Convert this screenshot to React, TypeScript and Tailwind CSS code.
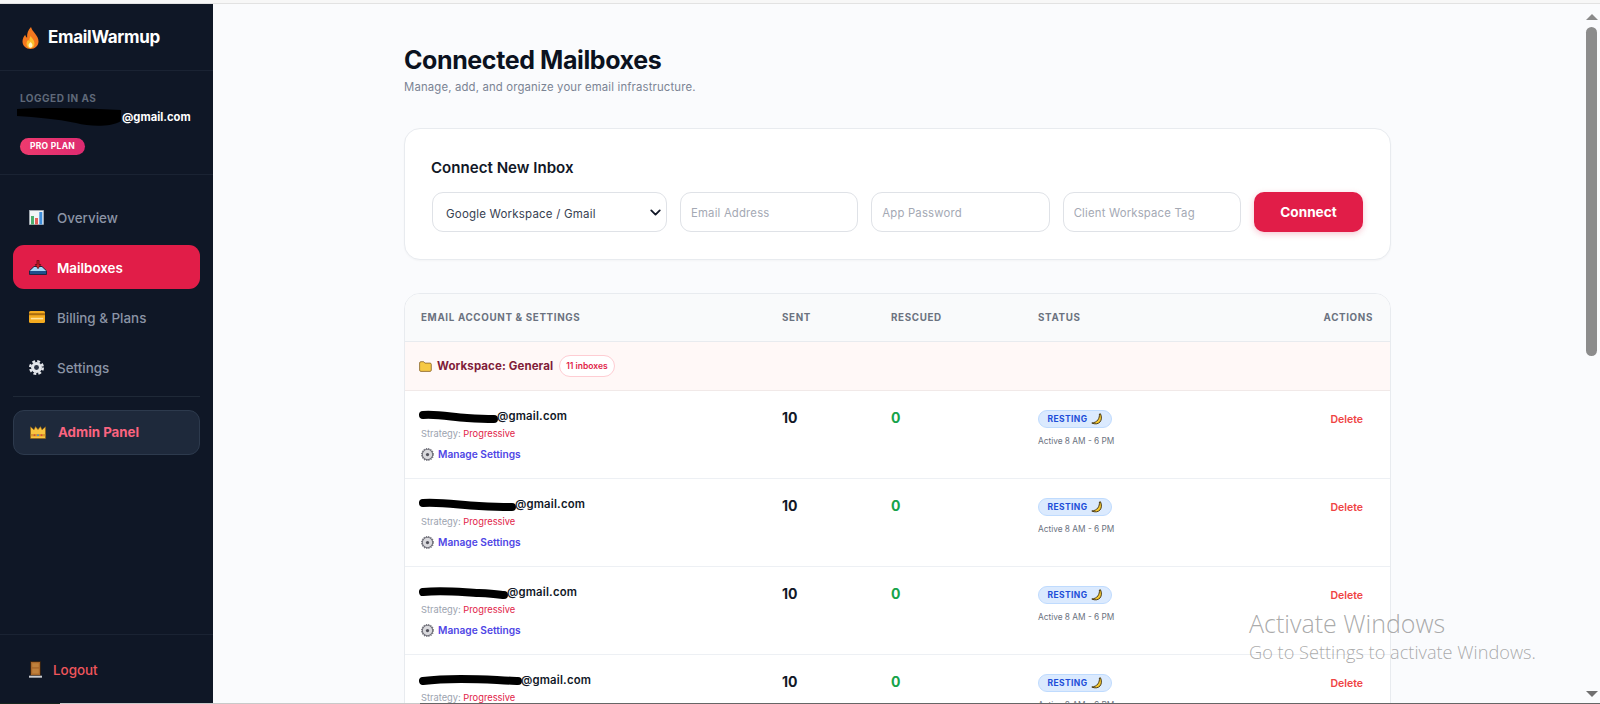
import React from "react";
import { ChevronDown } from "lucide-react";

const Fire = () => (
  <svg width="17" height="22" viewBox="0 0 17 22" className="shrink-0">
    <path d="M9 0c1 3 2 4 4 6.500 2 2.500 3.500 5 3.500 8C16.500 18.800 13 22 8.500 22S.5 18.800.5 14.500c0-3 1.500-5 2.700-6.700.3 1.500 1 2.400 1.900 2.900C4.800 6.500 6.200 2.500 9 0z" fill="#f4781f" />
    <path d="M8.800 9c.5 2 3.700 3.800 3.700 7.500 0 2.800-1.800 4.700-4 4.700s-4-1.900-4-4.500c0-1.800 1-3 1.900-3.900.2.800.5 1.300 1 1.600C7.200 12.500 7.600 10.500 8.800 9z" fill="#fbc02d" />
    <path d="M8.600 15c.8 1 1.900 1.700 1.900 3.200 0 1.300-.9 2.500-2 2.500s-2-1.100-2-2.400c0-1.400 1.500-2 2.100-3.300z" fill="#fff3c4" />
  </svg>
);
const Chart = () => (
  <svg width="15" height="15" viewBox="0 0 15 15" className="shrink-0">
    <rect x=".4" y=".4" width="14.200" height="14.200" fill="#f1f4f6" stroke="#a7afb8" strokeWidth=".6" />
    <rect x="2" y="6" width="3" height="8.500" fill="#4cae6c" />
    <rect x="6" y="8" width="3" height="6.500" fill="#e0605a" />
    <rect x="10.300" y="2" width="3" height="12.500" fill="#3f8fdc" />
  </svg>
);
const Inbox = () => (
  <svg width="18" height="15" viewBox="0 0 18 15" className="shrink-0">
    <path d="M5 6.500h8l4.500 4.300v3.700H.5v-3.700z" fill="#a6d8f8" stroke="#0c1a30" strokeWidth=".9" />
    <rect x=".9" y="11" width="16.200" height="3.100" fill="#1f4f8c" />
    <path d="M8 .3h2v4.200h1.800L9 8.700 6.200 4.500H8z" fill="#c81e24" stroke="#4a0a12" strokeWidth=".7" />
  </svg>
);
const Card = () => (
  <svg width="16" height="12" viewBox="0 0 16 12" className="shrink-0">
    <rect width="16" height="12" rx="1.500" fill="#f4ab1f" />
    <rect y="2.200" width="16" height="2" fill="#a86c10" />
    <rect x="1.800" y="6.800" width="12.400" height="1.600" fill="#ffe29a" />
  </svg>
);
const Gear = () => (
  <svg width="15" height="15" viewBox="0 0 16 16" className="shrink-0">
    <circle cx="8" cy="8" r="5.800" fill="#e4e7eb" />
    <circle cx="8" cy="8" r="6.700" fill="none" stroke="#e4e7eb" strokeWidth="2.600" strokeDasharray="3 2.260" />
    <circle cx="8" cy="8" r="2.600" fill="#2b3444" />
  </svg>
);
const SmallGear = () => (
  <svg width="13" height="13" viewBox="0 0 16 16" className="shrink-0">
    <circle cx="8" cy="8" r="6.400" fill="#d9d9dd" stroke="#71717a" strokeWidth="1.300" />
    <circle cx="8" cy="8" r="7.300" fill="none" stroke="#71717a" strokeWidth="1.300" strokeDasharray="1.500 1.360" />
    <circle cx="8" cy="8" r="2" fill="#52525b" />
  </svg>
);
const Crown = () => (
  <svg width="16" height="13" viewBox="0 0 16 13" className="shrink-0">
    <path d="M.5 .8l3.500 3L5.500.6 8 3.600 10.500.6 12 3.800l3.500-3v11.700H.5z" fill="#f9c440" stroke="#8a5a12" strokeWidth=".6" />
    <rect x=".8" y="8" width="14.400" height="2.400" fill="#d99a2b" />
    <circle cx="4.500" cy="9.200" r=".9" fill="#d8483a" />
    <circle cx="8" cy="9.200" r=".9" fill="#3f8fdc" />
    <circle cx="11.500" cy="9.200" r=".9" fill="#d8483a" />
  </svg>
);
const Door = () => (
  <svg width="13" height="17" viewBox="0 0 13 17" className="shrink-0">
    <rect x="1.500" y=".5" width="10" height="14" fill="#a8672a" stroke="#2b1c10" strokeWidth=".8" />
    <rect x="3.200" y="2.200" width="6.600" height="4" fill="#c0813c" />
    <rect x="3.200" y="7.600" width="6.600" height="5" fill="#c0813c" />
    <rect y="14.700" width="13" height="2" fill="#c9ccd1" />
  </svg>
);
const Folder = () => (
  <svg width="13" height="11" viewBox="0 0 13 11" className="shrink-0">
    <path d="M.6 2c0-.8.5-1.300 1.300-1.300h2.800l1.200 1.400h5.200c.7 0 1.200.5 1.200 1.200v5.900c0 .7-.5 1.200-1.200 1.200H1.900c-.8 0-1.300-.5-1.300-1.200z" fill="#f6c945" stroke="#86622a" strokeWidth=".8" />
  </svg>
);
const Banana = () => (
  <svg width="12" height="12" viewBox="0 0 12 12" className="shrink-0">
    <path d="M9.500.8c1.300 3 1.300 6-.5 8.200C7.200 11 3.800 11.500.8 10c2.800-.3 4.700-1.300 6-3C8.100 5.200 8.600 3 8.400 1z" fill="#f7c92f" stroke="#3a2c0c" strokeWidth=".9" strokeLinejoin="round" />
  </svg>
);
const Scribble = ({ w, d }: { w: number; d: string }) => (
  <svg width={w} height={14} viewBox={`0 0 ${w} 14`} className="shrink-0 -mr-px">
    <path d={d} fill="none" stroke="#000" strokeWidth="8" strokeLinecap="round" strokeLinejoin="round" />
  </svg>
);

const rows = [
  { w: 79, d: "M4 5C20 4 32 7 48 8s20 1 27 1" },
  { w: 97, d: "M4 5C24 4 40 7 60 8s26 1 33 1" },
  { w: 89, d: "M4 6C24 4 40 6 60 7s22 2 25 2" },
  { w: 103, d: "M4 7C26 4 60 5 78 6s18 1 21 1" },
];

const inputClass =
  "h-[40px] min-w-0 flex-1 rounded-[11px] border border-[#dfe2e7] bg-white px-[10px] pt-[2px] text-[11.300px] tracking-[0.2px] placeholder:text-[#a4a9b4]";

function NavItem({ icon, label, active }: { icon: React.ReactNode; label: string; active?: boolean }) {
  return (
    <div
      className={
        active
          ? "flex h-[44px] items-center rounded-[11px] bg-[#e11d48] pl-[16px] text-[13.400px] font-semibold text-white"
          : "flex h-[44px] items-center rounded-[11px] pl-[16px] text-[13.400px] font-medium text-[#8b94a5]"
      }
    >
      <span className="flex w-[27px] shrink-0 items-center">{icon}</span>
      <span className="ml-[1px] pt-[2px]">{label}</span>
    </div>
  );
}

function Row({ w, d, last }: { w: number; d: string; last?: boolean }) {
  return (
    <div className={last ? "grid h-[88px] shrink-0 grid-cols-[361px_109px_147px_1fr]" : "grid h-[88px] shrink-0 grid-cols-[361px_109px_147px_1fr] border-b border-[#edf0f4]"}>
      <div className="flex flex-col pl-[14px] pt-[17px]">
        <div className="flex h-[17px] items-center text-[11.300px] font-semibold tracking-[0.2px] text-[#111827]">
          <Scribble w={w} d={d} />
          <span>@gmail.com</span>
        </div>
        <div className="mt-[1px] pl-[2px] text-[9.300px] leading-[15px] text-[#9ca3af]">
          Strategy: <span className="text-[#e11d48]">Progressive</span>
        </div>
        <div className="mt-[5px] flex items-center gap-[4px] pl-[2px] text-[10.200px] font-semibold leading-[16px] text-[#4f46e5]">
          <SmallGear />
          <span>Manage Settings</span>
        </div>
      </div>
      <div className="pl-[16px] pt-[18px] text-[14px] font-bold leading-[18px] text-[#111827]">10</div>
      <div className="pl-[16px] pt-[18px] text-[14px] font-bold leading-[18px] text-[#16a34a]">0</div>
      <div className="flex items-start justify-between pl-[16px] pr-[27px]">
        <div className="pt-[19px]">
          <div className="flex h-[18px] w-[74px] items-center justify-center gap-[3px] rounded-full border border-[#bfdbfe] bg-[#dbeafe] text-[8.500px] font-bold tracking-[0.4px] text-[#1d4ed8]">
            RESTING <Banana />
          </div>
          <div className="mt-[6px] text-[8.300px] leading-[14px] text-[#6b7280]">Active 8 AM - 6 PM</div>
        </div>
        <div className="pt-[22px] text-[10.500px] font-semibold leading-[14px] text-[#ef4444]">Delete</div>
      </div>
    </div>
  );
}

export default function App() {
  return (
    <div className="relative flex h-[704px] w-[1600px] flex-col overflow-hidden bg-[#fafbfd] font-['Inter',sans-serif]">
      <div className="h-[4px] shrink-0 border-b border-[#e2e2e2] bg-[#f7f7f7]" />
      <div className="flex min-h-0 flex-1">
        <aside className="flex w-[213px] shrink-0 flex-col bg-[#0f1726]">
          <div className="flex h-[67px] shrink-0 items-center gap-[9px] border-b border-[#1a2333] pl-[22px] pt-[2px] text-[17px] font-bold tracking-[-0.3px] text-white">
            <Fire />
            <span>EmailWarmup</span>
          </div>
          <div className="flex h-[104px] shrink-0 flex-col border-b border-[#1a2333] pl-[20px] pt-[20px]">
            <div className="text-[10px] font-bold leading-[14px] tracking-[0.5px] text-[#5f6979]">LOGGED IN AS</div>
            <div className="-ml-[4px] mt-[3px] flex h-[18px] items-center text-[11.200px] font-bold text-white">
              <svg width="106" height="20" viewBox="0 0 106 20" className="shrink-0">
                <path d="M1 2C30 0 70 1 105 3v11C95 20 75 20 60 16 40 12 20 10 1 9z" fill="#000" />
              </svg>
              <span>@gmail.com</span>
            </div>
            <div className="mt-[12px] flex h-[17px] w-[65px] items-center justify-center rounded-full bg-gradient-to-r from-[#ee3a6e] to-[#dd2a70] text-[8.500px] font-bold tracking-[0.3px] text-white">
              PRO PLAN
            </div>
          </div>
          <nav className="flex flex-col gap-[6px] pl-[13px] pr-[13px] pt-[20px]">
            <NavItem icon={<Chart />} label="Overview" />
            <NavItem icon={<Inbox />} label="Mailboxes" active />
            <NavItem icon={<Card />} label="Billing & Plans" />
            <NavItem icon={<Gear />} label="Settings" />
          </nav>
          <div className="mx-[13px] mt-[7px] h-px bg-[#1f2937]" />
          <div className="mx-[13px] mt-[13px] flex h-[45px] items-center rounded-[11px] border border-[#2d3a4d] bg-[#1e293b] pl-[16px] text-[13.300px] font-bold text-[#fb6480]">
            <Crown />
            <span className="ml-[12px]">Admin Panel</span>
          </div>
          <div className="mt-auto flex h-[69px] shrink-0 items-center gap-[11px] border-t border-[#1a2333] pl-[29px] text-[13.400px] font-medium text-[#f0565c]">
            <Door />
            <span className="pt-[2px]">Logout</span>
          </div>
        </aside>
        <main className="min-w-0 flex-1 overflow-hidden">
          <div className="ml-[191px] flex w-[987px] flex-col pt-[41px]">
            <h1 className="text-[25px] font-bold leading-[30px] tracking-[-0.4px] text-[#0b1220]">Connected Mailboxes</h1>
            <p className="mt-[3px] text-[11.350px] leading-[18px] tracking-[0.15px] text-[#7b8494]">Manage, add, and organize your email infrastructure.</p>
            <section className="mt-[32px] flex h-[132px] flex-col rounded-[16px] border border-[#e8ebef] bg-white pl-[27px] pr-[27px] pt-[28px] shadow-[0_1px_2px_rgba(0,0,0,0.03)]">
              <h2 className="-ml-px text-[15.100px] font-semibold leading-[22px] text-[#111827]">Connect New Inbox</h2>
              <div className="mt-[13px] flex gap-[13px]">
                <div className="relative w-[235px] shrink-0">
                  <select className="h-[40px] w-full appearance-none rounded-[11px] border border-[#dfe2e7] bg-white pl-[13px] pt-[5px] text-[11.500px] tracking-[0.2px] text-[#374151]">
                    <option>Google Workspace / Gmail</option>
                  </select>
                  <ChevronDown size={17} strokeWidth={2.6} className="pointer-events-none absolute right-[3px] top-[12px] text-[#111827]" />
                </div>
                <input placeholder="Email Address" className={inputClass} />
                <input placeholder="App Password" className={inputClass} />
                <input placeholder="Client Workspace Tag" className={inputClass} />
                <button className="h-[40px] w-[109px] shrink-0 rounded-[10px] bg-[#e11d48] pt-[1px] text-[13.600px] font-bold text-white shadow-[0_2px_6px_rgba(225,29,72,0.25)]">Connect</button>
              </div>
            </section>
            <section className="mt-[33px] flex flex-col overflow-hidden rounded-t-[16px] border border-[#e8ebef] bg-white">
              <div className="grid h-[48px] shrink-0 grid-cols-[361px_109px_147px_1fr] items-center border-b border-[#e8ebef] bg-[#f9fafb] pt-[2px] text-[9.800px] font-bold tracking-[0.65px] text-[#6b7280]">
                <div className="pl-[16px]">EMAIL ACCOUNT &amp; SETTINGS</div>
                <div className="pl-[16px]">SENT</div>
                <div className="pl-[16px]">RESCUED</div>
                <div className="flex justify-between pl-[16px] pr-[17px]">
                  <span>STATUS</span>
                  <span>ACTIONS</span>
                </div>
              </div>
              <div className="flex h-[49px] shrink-0 items-center border-b border-[#f1e9e8] bg-[#fff8f7] pl-[14px]">
                <Folder />
                <span className="ml-[5px] pt-[1px] text-[11.500px] font-bold tracking-[0.1px] text-[#7f1d3a]">Workspace: General</span>
                <span className="ml-[6px] flex h-[22px] items-center rounded-full border border-[#fecdd3] bg-white px-[6px] text-[8.500px] font-semibold text-[#e11d48]">11 inboxes</span>
              </div>
              {rows.map((r, i) => (
                <Row key={i} w={r.w} d={r.d} last={i === 3} />
              ))}
            </section>
          </div>
        </main>
        <div className="flex w-[17px] shrink-0 flex-col items-center bg-[#fafbfd] pt-[10px]">
          <div className="h-0 w-0 border-x-[6px] border-b-[6px] border-x-transparent border-b-[#8a8a8a]" />
          <div className="mt-[7px] h-[329px] w-[11px] rounded-full bg-[#8c8c8c]" />
          <div className="mt-auto mb-[6px] h-0 w-0 border-x-[6px] border-t-[6px] border-x-transparent border-t-[#707070]" />
        </div>
      </div>
      <div className="flex h-px shrink-0">
        <div className="w-[60px] bg-[#16261f]" />
        <div className="w-[360px] bg-[#c9c9c9]" />
        <div className="flex-1 bg-[#666]" />
      </div>
      <div className="pointer-events-none absolute left-[1249px] top-[606px] font-['Open_Sans',sans-serif] font-light text-[#858585]/70">
        <div className="text-[25px] leading-[34px]">Activate Windows</div>
        <div className="text-[18.200px] leading-[24px]">Go to Settings to activate Windows.</div>
      </div>
    </div>
  );
}
